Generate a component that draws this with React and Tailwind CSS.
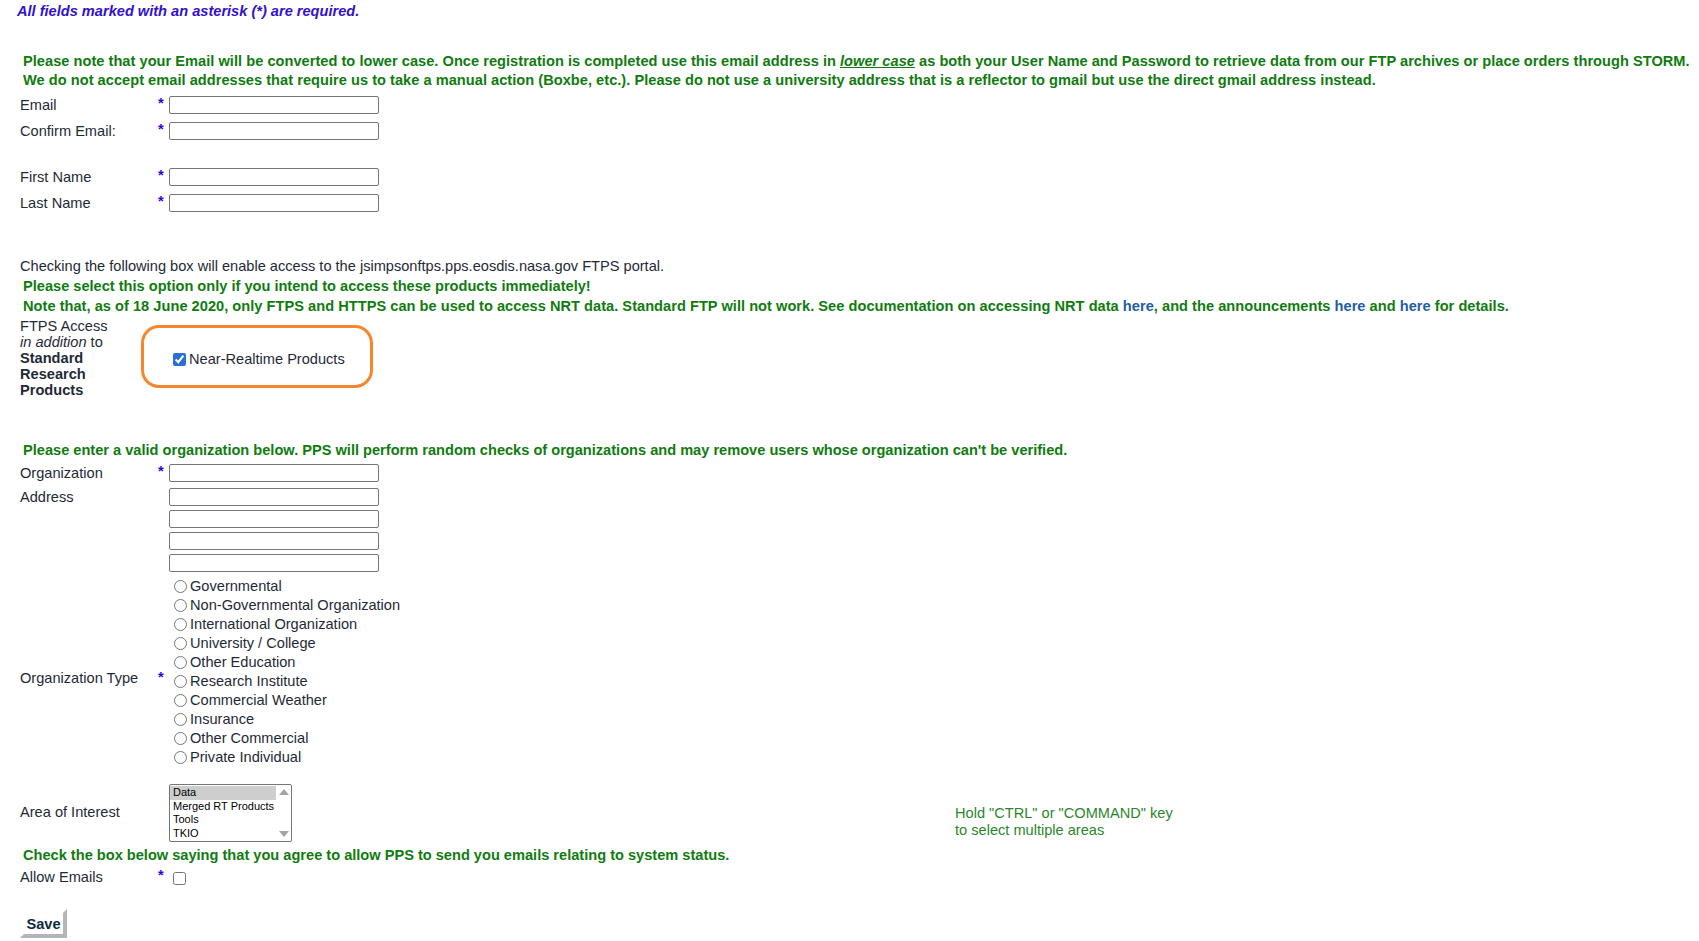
import React from 'react';

const GREEN = 'text-[#107c10]';

function Star({ className = 'self-start' }) {
    return <span className={'w-[11px] shrink-0 leading-[14px] text-[#3300ee] font-bold ' + className}>*</span>;
}

function TextBox() {
    return <input type="text" className="w-[210px] h-[18px] shrink-0 border border-[#767676] rounded-[2px] bg-white px-1 text-[13px] outline-none" />;
}

function Row({ label, star = false, className = '', children }) {
    return (
        <div className={'flex items-center h-[18px] ' + className}>
            <span className="w-[138px] shrink-0 leading-[17px]">{label}</span>
            {star ? <Star /> : <span className="w-[11px] shrink-0" />}
            {children}
        </div>
    );
}

const orgTypes = [
    'Governmental',
    'Non-Governmental Organization',
    'International Organization',
    'University / College',
    'Other Education',
    'Research Institute',
    'Commercial Weather',
    'Insurance',
    'Other Commercial',
    'Private Individual'
];

const areas = ['Data', 'Merged RT Products', 'Tools', 'TKIO'];

export default function App() {
    return (
        <div className="min-h-screen bg-white font-['Liberation_Sans',Arial,sans-serif] text-[14.6px] text-[#1e2a36]">
            {/* Required note */}
            <div className="pl-[17px] h-[22px] leading-[22px] font-bold italic text-[#3311cc]">
                All fields marked with an asterisk (*) are required.
            </div>

            {/* Email note */}
            <div className={'mt-[30px] pl-[23px] leading-[19px] font-bold whitespace-nowrap tracking-[0.03px] ' + GREEN}>
                Please note that your Email will be converted to lower case. Once registration is completed use this email address in <i className="underline">lower case</i> as both your User Name and Password to retrieve data from our FTP archives or place orders through STORM.
                <br />
                We do not accept email addresses that require us to take a manual action (Boxbe, etc.). Please do not use a university address that is a reflector to gmail but use the direct gmail address instead.
            </div>

            <div className="pl-[20px]">
                <Row label="Email" star className="mt-[6px]"><TextBox /></Row>
                <Row label="Confirm Email:" star className="mt-[8px]"><TextBox /></Row>
                <Row label="First Name" star className="mt-[28px]"><TextBox /></Row>
                <Row label="Last Name" star className="mt-[8px]"><TextBox /></Row>

                {/* FTPS section */}
                <div className="mt-[44px] leading-[20px]">
                    <div>Checking the following box will enable access to the jsimpsonftps.pps.eosdis.nasa.gov FTPS portal.</div>
                    <div className={'pl-[3px] font-bold whitespace-nowrap ' + GREEN}>
                        Please select this option only if you intend to access these products immediately!
                    </div>
                    <div className={'pl-[3px] font-bold whitespace-nowrap tracking-[0.03px] ' + GREEN}>
                        Note that, as of 18 June 2020, only FTPS and HTTPS can be used to access NRT data. Standard FTP will not work. See documentation on accessing NRT data <a href="#" className="text-[#1f5ca6]">here</a>, and the announcements <a href="#" className="text-[#1f5ca6]">here</a> and <a href="#" className="text-[#1f5ca6]">here</a> for details.
                    </div>
                </div>

                <div className="relative mt-[2px] flex items-center">
                    <div className="w-[149px] shrink-0 leading-[16px]">
                        FTPS Access<br />
                        <i>in addition</i> to<br />
                        <b>Standard</b><br />
                        <b>Research</b><br />
                        <b>Products</b>
                    </div>
                    <label className="flex items-center ml-[4px] mt-[3px]">
                        <input type="checkbox" defaultChecked className="m-0 w-[13px] h-[13px] accent-[#2b6fd6]" />
                        <span className="ml-[3px]">Near-Realtime Products</span>
                    </label>
                    {/* highlight annotation */}
                    <div className="absolute left-[121px] top-[7px] w-[232px] h-[63px] border-[3px] border-[#f5862e] rounded-[18px] pointer-events-none" />
                </div>

                {/* Organization */}
                <div className={'mt-[42px] pl-[3px] leading-[20px] font-bold whitespace-nowrap ' + GREEN}>
                    Please enter a valid organization below. PPS will perform random checks of organizations and may remove users whose organization can't be verified.
                </div>
                <Row label="Organization" star className="mt-[4px]"><TextBox /></Row>

                <div className="flex mt-[6px]">
                    <span className="w-[149px] shrink-0 leading-[17px] pt-[1px]">Address</span>
                    <div className="flex flex-col gap-[4px]">
                        <TextBox />
                        <TextBox />
                        <TextBox />
                        <TextBox />
                    </div>
                </div>

                <div className="flex mt-[5px]">
                    <div className="w-[149px] shrink-0 flex items-center pt-[14px]">
                        <span className="w-[138px] shrink-0">Organization Type</span>
                        <Star className="-mt-[4px]" />
                    </div>
                    <div className="flex flex-col">
                        {orgTypes.map((t) => (
                            <label key={t} className="flex items-center h-[19px]">
                                <input type="radio" name="orgType" className="m-0 ml-[5px] w-[13px] h-[13px]" />
                                <span className="ml-[3px] leading-[17px]">{t}</span>
                            </label>
                        ))}
                    </div>
                </div>

                {/* Area of interest */}
                <div className="flex items-center mt-[17px] h-[58px]">
                    <span className="w-[149px] shrink-0">Area of Interest</span>
                    <div className="w-[123px] h-[58px] shrink-0 flex border border-[#767676] rounded-[2px] bg-white overflow-hidden">
                        <div className="flex-1 pt-[1px] text-[11px] leading-[13.5px] text-black">
                            {areas.map((a, i) => (
                                <div key={a} className={'pl-[3px] whitespace-nowrap ' + (i === 0 ? 'bg-[#cecece]' : '')}>{a}</div>
                            ))}
                        </div>
                        <div className="w-[15px] flex flex-col items-center justify-between py-[4px]">
                            <div className="w-0 h-0 border-l-[5px] border-r-[5px] border-b-[6px] border-l-transparent border-r-transparent border-b-[#a3a3a3]" />
                            <div className="w-0 h-0 border-l-[5px] border-r-[5px] border-t-[6px] border-l-transparent border-r-transparent border-t-[#a3a3a3]" />
                        </div>
                    </div>
                    <div className="self-start mt-[21px] ml-[663px] leading-[17px] text-[#2b862b]">
                        Hold "CTRL" or "COMMAND" key<br />
                        to select multiple areas
                    </div>
                </div>

                {/* Allow emails */}
                <div className={'mt-[3px] pl-[3px] leading-[20px] font-bold whitespace-nowrap ' + GREEN}>
                    Check the box below saying that you agree to allow PPS to send you emails relating to system status.
                </div>
                <div className="flex items-center h-[20px] mt-[3px]">
                    <span className="w-[138px] shrink-0">Allow Emails</span>
                    <Star />
                    <input type="checkbox" className="m-0 ml-[4px] w-[13px] h-[13px]" />
                </div>

                <button
                    type="button"
                    className="mt-[21px] w-[47px] h-[29px] bg-white border-[4px] border-t-white border-l-white border-r-[#b5b5b5] border-b-[#b5b5b5] font-bold text-[#0d2a3e] leading-[20px]"
                >
                    Save
                </button>
            </div>
        </div>
    );
}
